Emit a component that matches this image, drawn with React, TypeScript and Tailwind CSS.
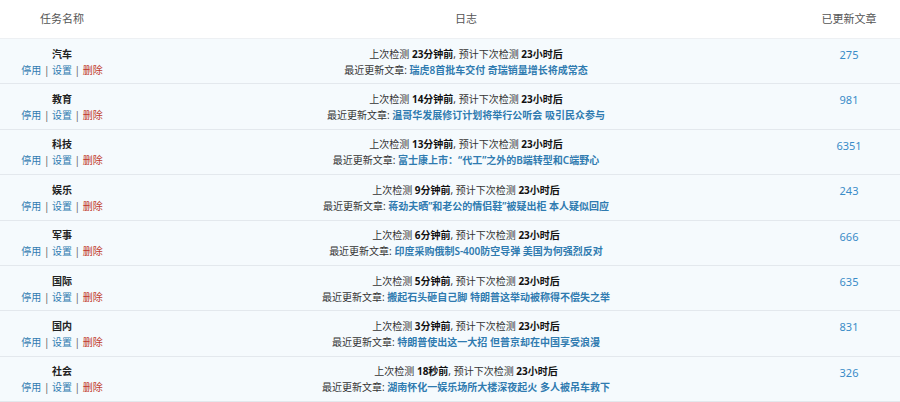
const tasks = [
  { name: "汽车", last: "23分钟前", title: "瑞虎8首批车交付 奇瑞销量增长将成常态", count: 275 },
  { name: "教育", last: "14分钟前", title: "温哥华发展修订计划将举行公听会 吸引民众参与", count: 981 },
  { name: "科技", last: "13分钟前", title: "富士康上市：“代工”之外的B端转型和C端野心", count: 6351 },
  { name: "娱乐", last: "9分钟前", title: "蒋劲夫晒”和老公的情侣鞋”被疑出柜 本人疑似回应", count: 243 },
  { name: "军事", last: "6分钟前", title: "印度采购俄制S-400防空导弹 美国为何强烈反对", count: 666 },
  { name: "国际", last: "5分钟前", title: "搬起石头砸自己脚 特朗普这举动被称得不偿失之举", count: 635 },
  { name: "国内", last: "3分钟前", title: "特朗普使出这一大招 但普京却在中国享受浪漫", count: 831 },
  { name: "社会", last: "18秒前", title: "湖南怀化一娱乐场所大楼深夜起火 多人被吊车救下", count: 326 },
];

function TaskRow({ task }: { task: (typeof tasks)[number] }) {
  return (
    <div className="grid grid-cols-[124px_1fr_102px] h-[45.4px] items-center border-b border-[#e3e8ed] bg-[#f5fafd] text-[10px] leading-[16px] text-[#333]">
      <div className="flex flex-col items-center pt-[1px]">
        <span className="font-bold text-[#222]">{task.name}</span>
        <span>
          <a className="text-[#2f7bb0]">停用</a>
          <span className="text-[#666]"> | </span>
          <a className="text-[#2f7bb0]">设置</a>
          <span className="text-[#666]"> | </span>
          <a className="text-[#c0392b]">删除</a>
        </span>
      </div>
      <div className="flex flex-col items-center pl-[10px] pt-[1px]">
        <span>
          上次检测 <b className="text-[#111]">{task.last}</b>, 预计下次检测{" "}
          <b className="text-[#111]">23小时后</b>
        </span>
        <span>
          最近更新文章: <a className="font-semibold text-[#2f7bb0]">{task.title}</a>
        </span>
      </div>
      <div className="self-start pt-[8px] text-center text-[11px] text-[#3a8cc8]">{task.count}</div>
    </div>
  );
}

export default function App() {
  return (
    <div
      className="w-[900px] h-[402px] overflow-hidden bg-white"
      style={{ fontFamily: '"Noto Sans", "Noto Sans CJK SC", sans-serif' }}
    >
      <div className="grid grid-cols-[124px_1fr_102px] h-[39px] items-center border-b border-[#edf0f3] text-[11px] text-[#555]">
        <div className="text-center">任务名称</div>
        <div className="text-center pl-[10px]">日志</div>
        <div className="text-center">已更新文章</div>
      </div>
      {tasks.map((t) => (
        <TaskRow key={t.name} task={t} />
      ))}
    </div>
  );
}
